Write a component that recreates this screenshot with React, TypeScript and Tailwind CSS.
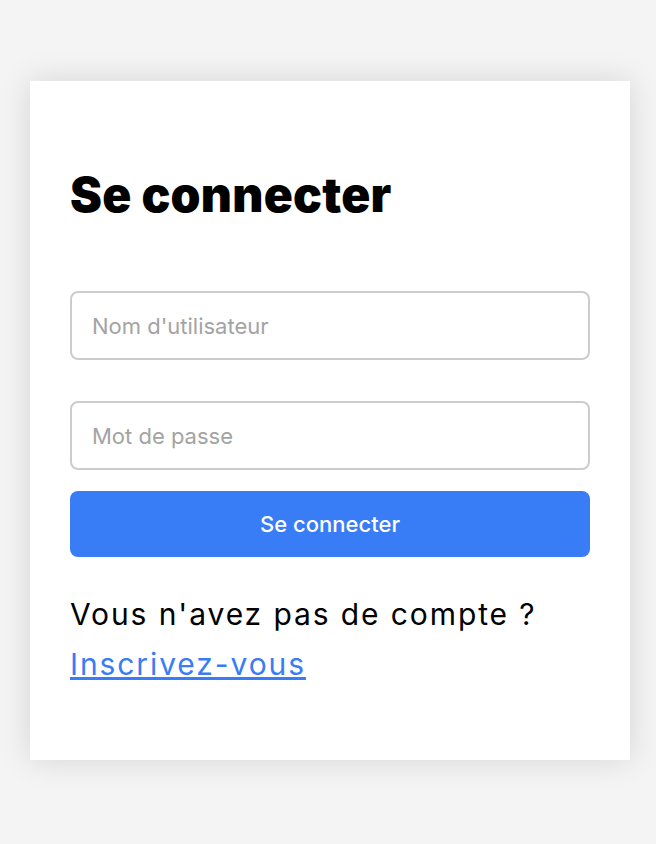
export default function App() {
  return (
    <div className="min-h-[844px] bg-[#f4f4f4] pt-[81px] px-[30px]" style={{ fontFamily: 'Inter, "Noto Sans", sans-serif' }}>
      <div className="bg-white w-[600px] h-[679px] px-[40px] pt-[40px] shadow-[0_0_30px_rgba(0,0,0,0.13)]">
        <h1 className="text-[48px] font-black text-black leading-[56px] mt-[46px] tracking-[0.25px]">Se connecter</h1>
        <form className="mt-[68px] flex flex-col">
          <input
            type="text"
            placeholder="Nom d'utilisateur"
            className="h-[69px] w-full border-2 border-[#cccccc] rounded-[8px] px-[20px] text-[22px] placeholder:text-[#a3a3a3] outline-none"
          />
          <input
            type="password"
            placeholder="Mot de passe"
            className="mt-[41px] h-[69px] w-full border-2 border-[#cccccc] rounded-[8px] px-[20px] text-[22px] placeholder:text-[#a3a3a3] outline-none"
          />
          <button
            type="submit"
            className="mt-[21px] h-[66px] w-full bg-[#387cf6] text-white rounded-[8px] text-[22px] font-medium"
          >
            Se connecter
          </button>
        </form>
        <p className="mt-[32px] text-[30px] leading-[50px] tracking-[1.9px] text-black">
          Vous n'avez pas de compte ?<br />
          <a href="#" className="text-[#387cf6] underline">Inscrivez-vous</a>
        </p>
      </div>
    </div>
  );
}
